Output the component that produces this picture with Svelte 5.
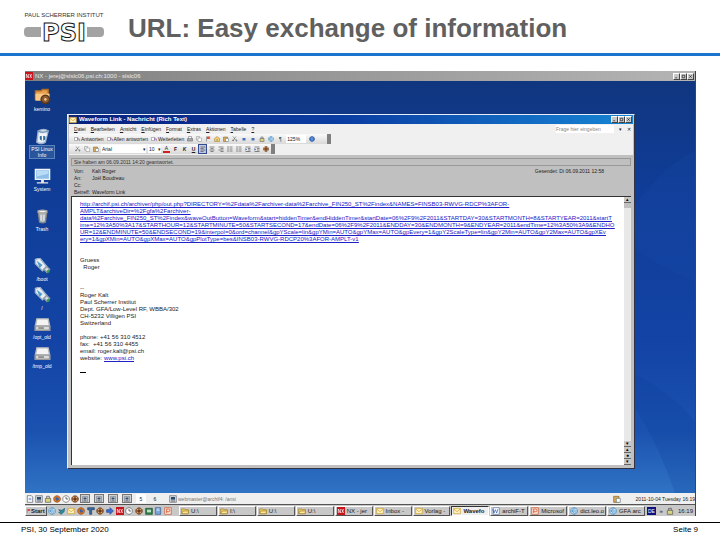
<script>
	const icons = {
		page: [['M2 1h6l2 2v8H2z', '#fff', '#556'], ['M4 5h4M4 7h4', 'none', '#4a7bc0']],
		folder: [['M1 3h4l1 1h5v6H1z', '#f3d56b', '#a07820'], ['M3 6h9l-2 4H1z', '#fbe9a0', '#a07820']],
		mail: [['M1 2h10v8H1z', '#fff3c0', '#d09a20'], ['M1 3l5 4 5-4', 'none', '#d09a20']],
		nx: [['M0 0h12v12H0z', '#c8141c'], ['M2 3v6M2 3l3 6V3M7 3l3 6M10 3L7 9', 'none', '#fff']],
		term: [['M1 1h10v10H1z', '#d5dbe0', '#667'], ['M3 3h6v4H3z', '#2d4a68'], ['M3 9h6', 'none', '#333']],
		browser: [['M6 1a5 5 0 1 0 .1 0z', '#d8eaf8', '#2478b8'], ['M2 6h8M8 3C5 2 3 4 4 7s4 3 5 1', 'none', '#2478b8']],
		fox: [['M6 1a5 5 0 1 0 .1 0z', '#e07a18', '#8c3d10'], ['M4 3l4 1 1 3-3 2-2-2z', '#3c5fa8']],
		bird: [['M1 4l5 1 4-3-1 5-4 4-4-3 3-1z', '#2b9098', '#245c80']],
		clock: [['M6 1a5 5 0 1 0 .1 0z', '#fff', '#555'], ['M6 3v3h3', 'none', '#222']],
		gear: [['M6 1a5 5 0 1 0 .1 0z', '#a56537', '#5c3c24'], ['M2 2l8 8M10 2l-8 8', 'none', '#f0d0a0'], ['M6 4a2 2 0 1 0 .1 0z', '#643a22']],
		word: [['M2 1h9v10H2z', '#fff', '#5577aa'], ['M1 3l2 6 2-5 2 5 2-6', 'none', '#2256b8']],
		power: [['M1 1h10v10H1z', '#fbe0d0', '#c55530'], ['M4 9V3h3a2 2 0 0 1 0 4H4', 'none', '#c8401c']],
		filter: [['M1 1h10v3H7v7H4V5L1 4z', '#3b6c9c', '#203f66']],
		green: [['M1 2h10v9H1z', '#31814c', '#184c2b'], ['M3 4h6v4H3z', '#bfe0c5']],
		book: [['M2 1h8v10H2z', '#7aa5db', '#375c90'], ['M4 3h4M4 5h4', 'none', '#fff']],
		arrow: [['M1 4h5V1l5 5-5 5V8H1z', '#3b6fd0', '#243e96']],
		reply: [['M1 3h7v6H1z', '#fff', '#777'], ['M11 10V6H6l2-2M6 6l2 2', 'none', '#7a4aa0']],
		print: [['M1 5h10v5H1z', '#aaa', '#555'], ['M3 1h6v4H3z', '#fff', '#667']],
		copy: [['M1 1h6v7H1z', '#eee', '#888'], ['M4 4h7v7H4z', '#fff', '#888']],
		paste: [['M1 2h8v9H1z', '#d8a95a', '#806020'], ['M5 5h6v6H5z', '#fff', '#677']],
		cut: [['M2 1l6 8M8 1L2 9', 'none', '#555'], ['M2 8a1 1 0 1 0 .1 0zM9 8a1 1 0 1 0 .1 0z', 'none', '#345']],
		flag: [['M3 1v10', 'none', '#555'], ['M4 1h7L9 4l2 2H4z', '#d85040']],
		move: [['M1 5l5-4 5 4v6H1z', '#f3cf6a', '#9c7828'], ['M6 10V6', 'none', '#2a68b0']],
		dot: [['M3 4h6v5H3z', '#4c6fb8']],
		left: [['M1 2h10M1 5h6M1 8h10M1 11h6', 'none', '#222']],
		center: [['M1 2h10M3 5h6M1 8h10M3 11h6', 'none', '#222']],
		right: [['M1 2h10M5 5h6M1 8h10M5 11h6', 'none', '#222']],
		list: [['M5 2h6M5 6h6M5 10h6', 'none', '#222'], ['M1 1h2v2H1zM1 5h2v2H1zM1 9h2v2H1z', '#333']],
		indent: [['M1 2h10M6 5h5M6 8h5M1 11h10', 'none', '#222'], ['M1 4l3 3-3 2z', '#2255aa']],
		help: [['M6 1a5 5 0 1 0 .1 0z', '#3a74c8', '#20458a'], ['M6 3v4M6 8v1', 'none', '#fff']],
		lock: [['M2 5h8v6H2z', '#d8d480', '#555'], ['M4 5V2h4v3', 'none', '#444']],
		home: [
			['M1 2h4l1-1h4v7H1z', '#e9a14d', '#b06b25'], ['M1 4h10v5H1z', '#f8c987'],
			['M8 5a3 3 0 1 0 .1 0z', '#8a5b35', '#5a3515'], ['M8 7a1 1 0 1 0 .1 0z', '#f0c58c']
		],
		info: [
			['M3 2q4-2 7 0l-2 8q-3 2-6 0z', '#e6edf4', '#9fb4cc'], ['M3 2q3 2 7 0', 'none', '#7898b8'],
			['M6 5a2 2 0 1 0 .1 0z', '#2c6a9e'], ['M4 5h5M6 5v4', 'none', '#fff']
		],
		monitor: [
			['M1 1h10v7H1z', '#8fbfe8', '#eef4fa'], ['M2 2h8v2L2 6z', '#b9dcf6'],
			['M5 8h2v2H5zM2 10h8v1H2z', '#e8e8e8']
		],
		trash: [
			['M3 3h6l-1 7q-2 1-4 0z', '#b5babd', '#80868a'], ['M3 2q3-1 6 0v1q-3 1-6 0z', '#f2f2f2', '#aaa'],
			['M5 5v4M7 5v4', 'none', '#dfe3e6']
		],
		usb: [
			['M1 1l3-1 5 6-3 3-5-5z', '#e8eff5', '#9eb5ca'], ['M2 2l4 3-2 2z', '#4f9cc6'],
			['M7 8l2-2 2 2-2 2z', '#d7dde2', '#8e9ca8'], ['M9 9l2-1v2l-2 1z', '#39a05a']
		],
		drive: [
			['M2 2h8l1 5v3H1V7z', '#f4f4f4', '#b5b9bc'], ['M1 7h10v3H1z', '#d8dadb', '#999'],
			['M3 8h4v1H3z', '#777']
		]
	};

	const mainItems = [
		{ icon: 'home', label: 'kemino' },
		{ icon: 'info', label: 'PSI Linux Info', selected: true },
		{ icon: 'monitor', label: 'System' },
		{ icon: 'trash', label: 'Trash' }
	];
	const drives = [
		{ icon: 'usb', label: '/boot' },
		{ icon: 'usb', label: '/' },
		{ icon: 'drive', label: '/opt_old' },
		{ icon: 'drive', label: '/tmp_old' }
	];

	const menus = ['Datei', 'Bearbeiten', 'Ansicht', 'Einfügen', 'Format', 'Extras', 'Aktionen', 'Tabelle', '?'];
	const replies = ['Antworten', 'Allen antworten', 'Weiterleiten'];
	const tools = ['print', 'copy', 'flag', 'move', 'paste', 'cut', 'dot', 'dot', 'lock', 'browser'];

	const headers = [
		['Von:', 'Kalt Roger'],
		['An:', 'Joël Boudreau'],
		['Cc:', ''],
		['Betreff:', 'Waveform Link']
	];

	const urlLines = [
		'http://archif.psi.ch/archiver/php/out.php?DIRECTORY=%2Fdata%2Farchiver-data%2Farchive_FIN250_ST%2Findex&NAMES=FINSB03-RWVG-RDCP%3AFOR-',
		'AMPLT&archiveDir=%2Fgfa%2Farchiver-',
		'data%2Farchive_FIN250_ST%2Findex&waveOutButton=Waveform&start=hiddenTimer&endHiddenTimer&startDate=06%2F9%2F2011&STARTDAY=30&STARTMONTH=8&STARTYEAR=2011&startT',
		'ime=12%3A50%3A17&STARTHOUR=12&STARTMINUTE=50&STARTSECOND=17&endDate=06%2F9%2F2011&ENDDAY=30&ENDMONTH=9&ENDYEAR=2011&endTime=12%3A50%3A9&ENDHO',
		'UR=12&ENDMINUTE=50&ENDSECOND=19&interpol=0&ord=channel&gpYScale=lin&gpYMin=AUTO&gpYMax=AUTO&gpEvery=1&gpY2ScaleType=lin&gpY2Min=AUTO&gpY2Max=AUTO&gpXEv',
		'ery=1&gpXMin=AUTO&gpXMax=AUTO&gpPlotType=bes&INSB03-RWVG-RDCP20%3AFOR-AMPLT-v1'
	];

	const signature = `--
Roger Kalt
Paul Scherrer Institut
Dept. GFA/Low-Level RF, WBBA/302
CH-5232 Villigen PSI
Switzerland

phone: +41 56 310 4512
fax:  +41 56 310 4455
email: roger.kalt@psi.ch`;

	const panelIcons = ['page', 'term', 'lock', 'fox', 'clock', 'gear'];
	const quickLaunch = ['browser', 'bird', 'mail', 'fox', 'filter', 'gear', 'arrow', 'nx', 'clock', 'gear', 'green', 'book', 'power'];

	const tasks = [
		{ icon: 'folder', label: 'U:\\' },
		{ icon: 'folder', label: 'I:\\' },
		{ icon: 'folder', label: 'U:\\' },
		{ icon: 'folder', label: 'U:\\' },
		{ icon: 'nx', label: 'NX - jer' },
		{ icon: 'mail', label: 'Inbox -' },
		{ icon: 'mail', label: 'Vorlag -' },
		{ icon: 'mail', label: 'Wavefo', active: true },
		{ icon: 'word', label: 'archiF-T' },
		{ icon: 'power', label: 'Microsof' },
		{ icon: 'browser', label: 'dict.leo.o' },
		{ icon: 'browser', label: 'GFA arc' }
	];
</script>

{#snippet icon(name)}
	<svg class="icon" viewBox="0 0 12 12" aria-hidden="true">
		{#each icons[name] as [d, fill, stroke]}
			<path {d} {fill} stroke={stroke ?? 'none'} />
		{/each}
	</svg>
{/snippet}

{#snippet controls()}
	<span class="controls">
		<button aria-label="Minimieren"><svg viewBox="0 0 8 8"><path d="M2 6h3" /></svg></button>
		<button aria-label="Maximieren"><svg viewBox="0 0 8 8"><path d="M2 2h4v4H2z" /></svg></button>
		<button aria-label="Schliessen"><svg viewBox="0 0 8 8"><path d="M2 2l4 4M6 2L2 6" /></svg></button>
	</span>
{/snippet}

{#snippet shortcut(item)}
	<button class="shortcut" class:selected={item.selected}>
		{@render icon(item.icon)}
		<span>{item.label}</span>
	</button>
{/snippet}

<div class="slide">
	<header>
		<svg class="logo" viewBox="0 0 82 42" role="img" aria-label="Paul Scherrer Institut">
			<rect x="1" y="20" width="80" height="10" rx="4" fill="#a3a3a3" />
			<rect x="18" y="14" width="46" height="20" rx="1" fill="#fff" />
			<text x="41" y="10" text-anchor="middle" class="logo-name">PAUL SCHERRER INSTITUT</text>
			<text x="41" y="34" text-anchor="middle" class="logo-psi">PSI</text>
		</svg>
		<h1>URL: Easy exchange of information</h1>
	</header>

	<main class="screen">
		<div class="screen-title">
			{@render icon('nx')}
			<span>NX - jerej@slslc06.psi.ch:1000 - slslc06</span>
			{@render controls()}
		</div>

		<div class="desktop">
			<svg class="swoosh" viewBox="0 0 670 411" preserveAspectRatio="none" aria-hidden="true">
				<path d="M560 270Q640 300 670 340V411H650Q620 320 560 270z" fill="#0c3c98" opacity=".2" />
				<path d="M590 150Q640 80 670 70V200Q620 180 590 150z" fill="#2c66c4" opacity=".1" />
			</svg>

			<nav class="shortcuts">
				<div class="main-items">
					{#each mainItems as item}{@render shortcut(item)}{/each}
				</div>
				<div class="drives">
					{#each drives as item}{@render shortcut(item)}{/each}
				</div>
			</nav>

			<section class="mail">
				<div class="mail-title">
					{@render icon('mail')}
					<h2>Waveform Link - Nachricht (Rich Text)</h2>
					{@render controls()}
				</div>

				<div class="bars">
					<div class="menubar">
						{#each menus as menu}
							<button><u>{menu[0]}</u>{menu.slice(1)}</button>
						{/each}
						<input class="question" aria-label="Frage" placeholder="Frage hier eingeben" />
						<button aria-label="Frageliste">▾</button>
						<button aria-label="Nachricht schliessen">✕</button>
					</div>
					<div class="toolbar">
						{#each replies as label}
							<button>{@render icon('reply')}{label}</button>
						{/each}
						{#each tools as tool}
							<button class="tool" aria-label={tool}>{@render icon(tool)}</button>
						{/each}
						<button class="tool">¶</button>
						<select class="zoom" aria-label="Zoom"><option>125%</option></select>
						<button class="tool" aria-label="Hilfe">{@render icon('help')}</button>
						<span class="grip"></span>
					</div>
					<div class="toolbar format">
						{#each ['cut', 'copy', 'paste'] as tool}
							<button class="tool" aria-label={tool}>{@render icon(tool)}</button>
						{/each}
						<span class="combo">
							<select class="font" aria-label="Schriftart"><option>Arial</option></select>▾
						</span>
						<span class="combo">
							<select class="size" aria-label="Schriftgrad"><option>10</option></select>▾
						</span>
						<button class="tool color">A</button>
						<button class="tool"><b>F</b></button>
						<button class="tool"><b><i>K</i></b></button>
						<button class="tool"><b><u>U</u></b></button>
						<button class="tool pressed" aria-label="Linksbündig">{@render icon('left')}</button>
						{#each ['center', 'right', 'list', 'list', 'indent', 'indent', 'gear'] as tool}
							<button class="tool" aria-label={tool}>{@render icon(tool)}</button>
						{/each}
						<span class="grip"></span>
					</div>
				</div>

				<p class="replied">Sie haben am 06.09.2011 14:20 geantwortet.</p>
				<div class="envelope">
					<dl>
						{#each headers as [name, value]}
							<dt>{name}</dt>
							<dd>{value}</dd>
						{/each}
					</dl>
					<span class="sent">Gesendet: Di 06.09.2011 12:58</span>
				</div>

				<div class="body">
					<article>
						<a class="long-url" href="http://archif.psi.ch/">
							{#each urlLines as line}<span>{line}</span>{/each}
						</a>
						<pre class="greeting">Gruess
  Roger</pre>
						<pre>{signature}</pre>
						<p class="website"><span>website:</span><a href="http://www.psi.ch">www.psi.ch</a></p>
						<span class="caret"></span>
					</article>
					<div class="scrollbar">
						<button aria-label="Nach oben">▴</button>
						<span class="thumb"></span>
						<span class="track"></span>
						<button aria-label="Nach unten">▾</button>
						<button aria-label="Vorherige">▴</button>
						<button aria-label="Auswahl">●</button>
						<button aria-label="Nächste">▾</button>
					</div>
				</div>
			</section>
		</div>

		<div class="panel">
			{#each panelIcons as name}
				<button aria-label={name}>{@render icon(name)}</button>
			{/each}
			<div class="pager">
				{#each [1, 2, 3, 4] as n}
					<button aria-label="Arbeitsfläche {n}">{@render icon('term')}</button>
				{/each}
				<button class="current">5</button>
				<button class="plain">6</button>
			</div>
			{@render icon('term')}
			<span class="window-name">webmaster@archif4: /ansi</span>
			<span class="notes">{@render icon('paste')}</span>
			<time>2011-10-04 Tuesday 16:19</time>
		</div>

		<div class="taskbar">
			<button class="start"><span class="flag">{@render icon('flag')}</span>Start</button>
			<div class="quick">
				{#each quickLaunch as name}
					<button aria-label={name}>{@render icon(name)}</button>
				{/each}
			</div>
			<div class="tasks">
				{#each tasks as task}
					<button class:active={task.active}>{@render icon(task.icon)}<span>{task.label}</span></button>
				{/each}
			</div>
			<div class="tray">
				<span class="lang">DE</span>
				<span>»</span>
				{@render icon('lock')}
				<time>16:19</time>
			</div>
		</div>
	</main>

	<footer>
		<span>PSI, 30 September 2020</span>
		<span>Seite 9</span>
	</footer>
</div>

<style>
	:global(body) {
		margin: 0;
		background: #fff;
	}

	.slide {
		display: flex;
		flex-direction: column;
		min-height: 100vh;
		font-family: 'Liberation Sans', Arial, sans-serif;
		color: #222;
	}

	button,
	input,
	select {
		margin: 0;
		padding: 0;
		border: 0;
		border-radius: 0;
		background: none;
		font: inherit;
		color: inherit;
		appearance: none;
	}

	.icon {
		display: block;
		flex: none;
		width: 8px;
		height: 8px;
	}

	header {
		display: flex;
		align-items: center;
		gap: 23px;
		height: 51px;
		padding: 2px 0 0 23px;
		border-bottom: 3px solid #1b75cf;
	}

	.logo {
		flex: none;
		width: 82px;
		height: 42px;
	}

	.logo-name {
		font-size: 6px;
		fill: #333;
	}

	.logo-psi {
		font-family: 'DejaVu Sans', sans-serif;
		font-size: 24px;
		font-weight: 700;
		fill: #fff;
		stroke: #111;
		stroke-width: 1;
	}

	h1 {
		margin: 0;
		font-size: 26px;
		line-height: 32px;
		font-weight: 700;
		color: #606060;
		white-space: nowrap;
	}

	.screen {
		flex: 1;
		display: flex;
		flex-direction: column;
		margin: 15px 24px 6px 25px;
		border-right: 1px solid #444;
		box-sizing: border-box;
		font-size: 5px;
		line-height: 6px;
	}

	.screen-title {
		display: flex;
		align-items: center;
		gap: 2px;
		height: 10px;
		background: linear-gradient(90deg, #808080, #b4b4b4);
		color: #e8e8e8;
		font-size: 6px;
	}

	.controls {
		display: flex;
		margin-left: auto;
		padding-right: 1px;
	}

	.controls button {
		width: 7px;
		height: 7px;
		background: #c8c8c8;
		border: 1px solid;
		border-color: #fff #444 #444 #fff;
		box-sizing: border-box;
	}

	.controls svg {
		display: block;
		width: 5px;
		height: 5px;
		fill: none;
		stroke: #111;
		stroke-width: 1;
	}

	.desktop {
		position: relative;
		flex: 1;
		display: flex;
		background: linear-gradient(#10367f, #0f3c96 25%, #1344a6 65%, #1b52b0 85%, #3073c4);
	}

	.swoosh {
		position: absolute;
		inset: 0;
		width: 100%;
		height: 100%;
	}

	.shortcuts {
		flex: none;
		display: flex;
		flex-direction: column;
		gap: 10px;
		width: 42px;
		padding-top: 7px;
	}

	.shortcut {
		position: relative;
		display: flex;
		flex-direction: column;
		align-items: center;
		gap: 1px;
		width: 34px;
		height: 40px;
		color: #fff;
		text-align: center;
	}

	.drives .shortcut {
		height: 29px;
	}

	.shortcut .icon {
		width: 17px;
		height: 17px;
	}

	.shortcut.selected span {
		width: 24px;
		background: #28559c;
		outline: 1px solid #5a82bd;
	}

	.mail {
		position: relative;
		flex: 1;
		display: flex;
		flex-direction: column;
		min-width: 0;
		margin: 33px 60px 24px 0;
		padding: 0 3px 3px;
		background: #c0c0c0;
		border: 1px solid;
		border-color: #e8eef8 #334 #334 #e8eef8;
	}

	.mail-title {
		display: flex;
		align-items: center;
		gap: 2px;
		height: 9px;
		margin: 0 -2px;
		background: linear-gradient(90deg, #08207c, #0b3fa4 50%, #1685d4);
		color: #fff;
	}

	h2 {
		margin: 0;
		font-size: 6px;
		line-height: 9px;
		font-weight: 700;
	}

	.bars {
		height: 31px;
		margin: 0 -2px;
		background: #f0f0f0;
	}

	.menubar,
	.toolbar {
		display: flex;
		align-items: center;
		height: 10px;
		padding-left: 5px;
	}

	.menubar {
		gap: 5px;
	}

	.question {
		width: 58px;
		height: 8px;
		margin-left: auto;
		background: #fff;
	}

	.question::placeholder {
		color: #888;
		opacity: 1;
	}

	.menubar button:last-child {
		padding-right: 2px;
	}

	.toolbar {
		gap: 3px;
		width: 262px;
		box-sizing: border-box;
		background: linear-gradient(#fafafa, #d8d8d8);
		white-space: nowrap;
	}

	.toolbar button {
		display: flex;
		align-items: center;
		gap: 1px;
	}

	.toolbar .icon {
		width: 6px;
		height: 6px;
	}

	.toolbar .tool {
		flex: none;
		justify-content: center;
		width: 6px;
		height: 8px;
	}

	.toolbar.format {
		gap: 2px;
		width: 206px;
	}

	.toolbar.format .tool {
		width: 7px;
	}

	.toolbar .pressed {
		background: #c0c8e0;
		outline: 1px solid #334a90;
	}

	.toolbar .color {
		border-bottom: 2px solid #d02020;
		box-sizing: border-box;
	}

	.combo {
		display: flex;
		align-items: center;
		background: #fff;
	}

	select {
		height: 8px;
		background: #fff;
		padding-left: 1px;
	}

	.zoom {
		width: 20px;
	}

	.font {
		width: 42px;
	}

	.size {
		width: 10px;
	}

	.grip {
		width: 4px;
		height: 10px;
		margin-left: auto;
		background: #808080;
	}

	.replied {
		margin: 3px 0 0;
		padding-left: 2px;
		border: 1px solid #999;
		color: #333;
	}

	.envelope {
		display: flex;
		justify-content: space-between;
		height: 30px;
		padding: 2px 27px 0 3px;
		box-sizing: border-box;
	}

	dl {
		display: grid;
		grid-template-columns: 18px auto;
		margin: 0;
		line-height: 7px;
	}

	dd {
		margin: 0;
	}

	.body {
		flex: 1;
		display: flex;
		background: #fff;
		border-top: 1px solid #333;
		border-left: 1px solid #333;
	}

	article {
		flex: 1;
		min-width: 0;
		padding: 4px 8px;
		font-size: 6px;
		line-height: 7px;
	}

	article a {
		color: #2020c8;
	}

	.long-url span {
		display: block;
		white-space: nowrap;
		text-decoration: underline;
	}

	pre {
		margin: 0;
		font: inherit;
	}

	.greeting {
		padding: 14px 0;
	}

	.website {
		display: flex;
		gap: 2px;
		margin: 0;
	}

	.caret {
		display: block;
		width: 6px;
		height: 1px;
		margin-top: 10px;
		background: #000;
	}

	.scrollbar {
		display: flex;
		flex-direction: column;
		width: 7px;
		background: #e8e8e8;
	}

	.scrollbar button {
		height: 6px;
		background: #c8c8c8;
		border-bottom: 1px solid #666;
		line-height: 5px;
		color: #000;
	}

	.thumb {
		height: 5px;
		background: #c0c0c0;
	}

	.track {
		flex: 1;
	}

	.panel {
		display: flex;
		align-items: center;
		gap: 1px;
		height: 11px;
		padding-left: 1px;
		background: #efefef;
	}

	.pager {
		display: flex;
		gap: 4px;
		margin: 0 8px 0 0;
	}

	.pager button {
		display: flex;
		align-items: center;
		justify-content: center;
		width: 10px;
		height: 9px;
		background: #d0d0d0;
		border: 1px solid #777;
		box-sizing: border-box;
	}

	.pager .icon {
		width: 6px;
		height: 6px;
	}

	.pager .current {
		background: #fff;
		border-color: #fff;
	}

	.pager .plain {
		background: none;
		border-color: #efefef;
	}

	.window-name {
		color: #777;
	}

	.notes {
		margin-left: auto;
		padding-right: 14px;
	}

	.taskbar {
		display: flex;
		align-items: center;
		height: 12px;
		background: #c8c8c8;
		border-top: 1px solid #555;
		box-sizing: border-box;
	}

	.start {
		display: flex;
		align-items: center;
		width: 22px;
		height: 10px;
		border: 1px solid;
		border-color: #fff #555 #555 #fff;
		box-sizing: border-box;
		font-size: 6px;
		font-weight: 700;
	}

	.flag .icon {
		width: 5px;
	}

	.quick {
		display: flex;
		justify-content: space-between;
		width: 124px;
		margin: 0 7px 0 1px;
	}

	.tasks {
		flex: 1;
		display: grid;
		grid-template-columns: repeat(12, minmax(0, 1fr));
		gap: 1px;
	}

	.tasks button {
		display: flex;
		align-items: center;
		gap: 2px;
		height: 10px;
		padding-left: 1px;
		border: 1px solid;
		border-color: #fff #555 #555 #fff;
		box-sizing: border-box;
		overflow: hidden;
		font-size: 6px;
		white-space: nowrap;
	}

	.tasks .active {
		background: #eee;
		border-color: #333 #fff #fff #333;
		font-weight: 700;
	}

	.tray {
		display: flex;
		align-items: center;
		justify-content: space-between;
		width: 46px;
		margin-left: 2px;
		padding-right: 2px;
		font-size: 6px;
	}

	.lang {
		padding: 1px;
		background: #101080;
		color: #fff;
		font-size: 5px;
	}

	footer {
		display: flex;
		justify-content: space-between;
		height: 18px;
		padding: 2px 22px 0 21px;
		box-sizing: border-box;
		border-top: 1px solid #000;
		font-size: 8px;
		line-height: 10px;
		color: #000;
	}
</style>
